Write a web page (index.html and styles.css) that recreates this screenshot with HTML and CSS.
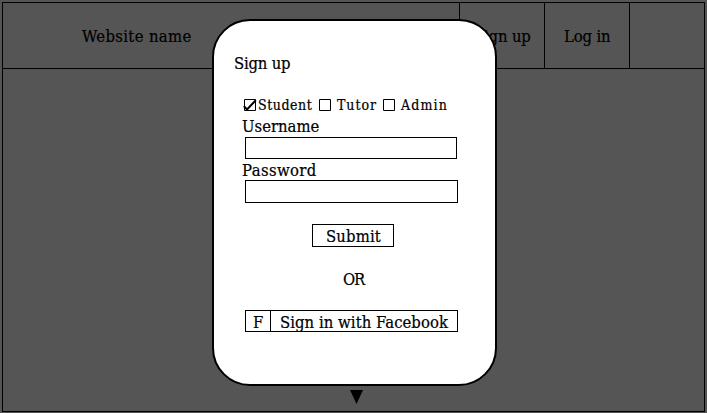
FILE: index.html
```html
<!DOCTYPE html>
<html lang="en">
<head>
<meta charset="utf-8">
<title>Sign up</title>
<link rel="stylesheet" href="styles.css">
</head>
<body>
<div class="page">
  <header class="bar">
    <div class="brand">Website name</div>
    <div class="tab">Sign up</div>
    <div class="tab">Log in</div>
    <div class="tab last"></div>
  </header>
  <main class="content">
    <svg class="arrow" viewBox="0 0 13 14"><path d="M0 0H13L6.5 14Z"/></svg>
  </main>
</div>
<section class="modal">
  <h1 class="title">Sign up</h1>
  <div class="roles">
    <label class="role first"><svg class="box" viewBox="0 0 14 14"><path class="line" d="M1.5 .5H12.5V11.5H1.5Z"/><path class="tick" d="M.8 7L4 10.5L12.8 1.2"/></svg>Student</label>
    <label class="role second"><svg class="box" viewBox="0 0 14 14"><path class="line" d="M1.5 .5H12.5V11.5H1.5Z"/></svg>Tutor</label>
    <label class="role third"><svg class="box" viewBox="0 0 14 14"><path class="line" d="M1.5 .5H12.5V11.5H1.5Z"/></svg>Admin</label>
  </div>
  <div class="label">Username</div>
  <div class="field user"></div>
  <div class="label password">Password</div>
  <div class="field pass"></div>
  <div class="submit">Submit</div>
  <div class="or">OR</div>
  <div class="facebook"><div class="f">F</div><div class="fb">Sign in with Facebook</div></div>
</section>
</body>
</html>
```
FILE: styles.css
```css
* { box-sizing: border-box; }
body {
  margin: 0;
  height: 413px;
  padding: 2px;
  overflow: hidden;
  background: #555;
  color: #000;
  font: 16.5px/22px "DejaVu Serif Condensed", "DejaVu Serif", serif;
  font-stretch: condensed;
  white-space: nowrap;
  -webkit-text-stroke: .2px #000;
}
.page { width: 703px; height: 410px; border: 1px solid #000; display: flex; flex-direction: column; }
.bar { display: flex; height: 66px; border-bottom: 1px solid #000; line-height: 68px; }
.brand { width: 456px; padding-left: 79px; letter-spacing: .36px; }
.tab { width: 85px; border-left: 1px solid #000; padding-left: 14px; letter-spacing: -.15px; }
.tab + .tab { padding-left: 19px; }
.last { width: 75px; }
.content { flex: 1; display: flex; align-items: flex-end; }
.arrow { width: 13px; height: 14px; margin: 0 0 7px 347px; }
.modal {
  position: absolute;
  left: 212px;
  top: 19px;
  width: 285px;
  height: 367px;
  border: 2px solid #000;
  border-radius: 38px;
  background: #fff;
  padding: 32px 0 0 28px;
}
.title { margin: 0 0 19px -8px; font: inherit; font-stretch: condensed; letter-spacing: -.2px; }
.roles { display: flex; height: 22px; font-size: 14px; line-height: 23px; }
.role { display: flex; width: 65px; padding-left: 1px; }
.first { width: 75px; letter-spacing: .55px; }
.second { width: 64px; letter-spacing: .95px; }
.third { letter-spacing: 1.15px; }
.box { width: 14px; height: 14px; margin: 5px 1px 0 0; flex: none; }
.role + .role .box { margin-right: 5px; }
.line { fill: none; stroke: #000; }
.tick { fill: none; stroke: #000; stroke-width: 2; }
.label { height: 21px; }
.password { letter-spacing: .4px; line-height: 23px; }
.field { margin-left: 3px; height: 22px; border: 1px solid #000; }
.user { width: 212px; }
.pass { width: 213px; height: 23px; }
.submit { width: 82px; height: 23px; margin: 21px 0 0 70px; border: 1px solid #000; padding-left: 13px; line-height: 24px; letter-spacing: .15px; }
.or { margin: 21px 0 0 101px; height: 22px; line-height: 24px; letter-spacing: -1.2px; }
.facebook { display: flex; width: 213px; height: 22px; margin: 20px 0 0 3px; border: 1px solid #000; line-height: 24px; letter-spacing: .05px; }
.f { width: 25px; border-right: 1px solid #000; padding-left: 7px; }
.fb { padding-left: 9px; }
```
